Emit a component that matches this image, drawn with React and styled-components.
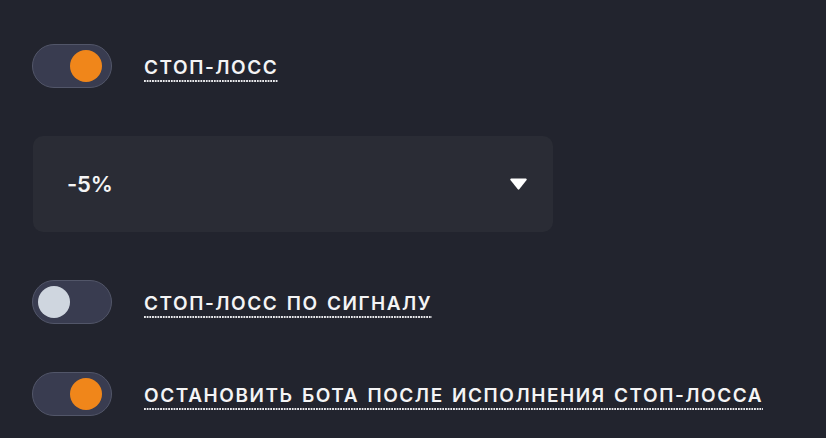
import React, { useState } from "react";
import styled, { createGlobalStyle } from "styled-components";

const GlobalStyle = createGlobalStyle`
  html, body {
    margin: 0;
    padding: 0;
    background: #22242e;
  }
  * {
    box-sizing: border-box;
  }
`;

const Page = styled.div`
  min-height: 438px;
  padding: 44px 32px 0;
  display: flex;
  flex-direction: column;
  align-items: flex-start;
  gap: 48px;
  font-family: Inter, "Noto Sans", sans-serif;
  color: #f4f4f5;
`;

const Row = styled.label`
  display: flex;
  align-items: center;
  gap: 32px;
  cursor: pointer;
`;

const Track = styled.span`
  display: flex;
  align-items: center;
  width: 80px;
  height: 44px;
  padding: 0 4.5px;
  border-radius: 22px;
  background: #393c50;
  border: 1.5px solid #525669;
  flex-shrink: 0;
`;

const Knob = styled.span`
  width: 32px;
  height: 32px;
  border-radius: 50%;
  background: ${({ $on }) => ($on ? "#f0861a" : "#cfd6df")};
  transform: translateX(${({ $on }) => ($on ? "32px" : "0")});
  transition: transform 0.15s ease;
`;

const Label = styled.span`
  font-size: 19px;
  font-weight: 600;
  letter-spacing: 1.55px;
  word-spacing: 2px;
  text-transform: uppercase;
  line-height: 22px;
  padding: 6px 0 3px;
  background-image: linear-gradient(to right, #e9e9ec 50%, transparent 50%);
  background-size: 2.7px 2px;
  background-repeat: repeat-x;
  background-position: left bottom;
`;

const Select = styled.div`
  width: 520px;
  height: 96px;
  margin-left: 1px;
  padding: 0 26px 0 34px;
  border-radius: 10px;
  background: #2a2c35;
  display: flex;
  align-items: center;
  justify-content: space-between;
`;

const Value = styled.span`
  font-size: 22px;
  font-weight: 600;
  letter-spacing: -0.2px;
`;

const Caret = styled.svg`
  width: 17px;
  height: 12px;
  display: block;
`;

function Switch({ on, onToggle, children }) {
  return (
    <Row onClick={onToggle}>
      <Track>
        <Knob $on={on} />
      </Track>
      <Label>{children}</Label>
    </Row>
  );
}

export default function App() {
  const [stopLoss, setStopLoss] = useState(true);
  const [bySignal, setBySignal] = useState(false);
  const [stopBot, setStopBot] = useState(true);

  return (
    <>
      <GlobalStyle />
      <Page>
        <Switch on={stopLoss} onToggle={() => setStopLoss((v) => !v)}>
          Стоп-лосс
        </Switch>
        <Select>
          <Value>-5%</Value>
          <Caret viewBox="0 0 17 12">
            <path d="M1.2 0.5h14.6c0.8 0 1.2 0.8 0.8 1.4l-7.3 9.4c-0.4 0.5-1.1 0.5-1.5 0L0.4 1.9C0 1.3 0.4 0.5 1.2 0.5z" fill="#fff" />
          </Caret>
        </Select>
        <Switch on={bySignal} onToggle={() => setBySignal((v) => !v)}>
          Стоп-лосс по сигналу
        </Switch>
        <Switch on={stopBot} onToggle={() => setStopBot((v) => !v)}>
          Остановить бота после исполнения стоп-лосса
        </Switch>
      </Page>
    </>
  );
}
